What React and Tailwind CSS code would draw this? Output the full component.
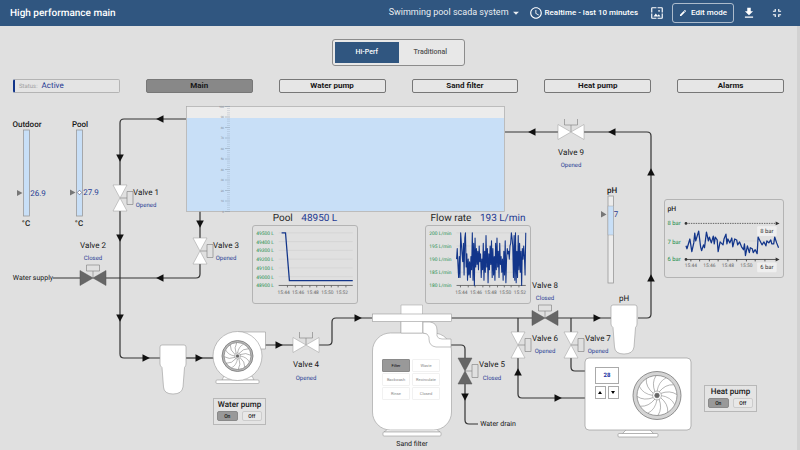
import { useState } from "react";
import {
  MdAccessTime,
  MdArrowDropDown,
  MdEdit,
  MdFileDownload,
  MdFullscreenExit,
  MdWallpaper,
} from "react-icons/md";

// Diagram units. Every node on the canvas is placed in this space.
const CANVAS = { width: 797, height: 352 };

const place = (x, y, w, h) => ({
  left: `${(x / CANVAS.width) * 100}%`,
  top: `${(y / CANVAS.height) * 100}%`,
  ...(w && { width: `${(w / CANVAS.width) * 100}%` }),
  ...(h && { height: `${(h / CANVAS.height) * 100}%` }),
});

const TABS = ["Main", "Water pump", "Sand filter", "Heat pump", "Alarms"];

const PIPES = [
  "M186 21H124Q120 21 120 25V256Q120 260 124 260H160",
  "M53 180H196Q200 180 200 176V113",
  "M186 260H214",
  "M265 247H328Q332 247 332 243V224Q332 220 336 220H372",
  "M451 220H611",
  "M451 247H461Q465 247 465 251V322Q465 326 469 326H478",
  "M518 220V296Q518 300 522 300H585",
  "M571 220V269Q571 273 575 273H585",
  "M638 220H647Q651 220 651 216V38Q651 34 647 34H505",
];

const ARROWS = [
  { x: 160, y: 21, dir: 180 },
  { x: 120, y: 60, dir: 90 },
  { x: 120, y: 140, dir: 90 },
  { x: 120, y: 220, dir: 90 },
  { x: 146, y: 260, dir: 0 },
  { x: 160, y: 180, dir: 180 },
  { x: 200, y: 126, dir: 90 },
  { x: 199, y: 260, dir: 0 },
  { x: 279, y: 247, dir: 0 },
  { x: 358, y: 220, dir: 0 },
  { x: 465, y: 299, dir: 90 },
  { x: 518, y: 274, dir: 270 },
  { x: 558, y: 300, dir: 0 },
  { x: 597, y: 220, dir: 0 },
  { x: 651, y: 180, dir: 270 },
  { x: 651, y: 74, dir: 270 },
  { x: 612, y: 34, dir: 180 },
  { x: 532, y: 34, dir: 180 },
];

const VALVES = [
  { name: "Valve 1", x: 120, y: 100, open: true, vertical: true, label: [146, 95], state: [146, 108] },
  { name: "Valve 2", x: 93, y: 180, open: false, label: [93, 148], state: [93, 161] },
  { name: "Valve 3", x: 200, y: 153, open: true, vertical: true, label: [226, 148], state: [226, 161] },
  { name: "Valve 4", x: 306, y: 247, open: true, label: [306, 267], state: [306, 281] },
  { name: "Valve 5", x: 465, y: 273, open: false, vertical: true, label: [492, 267], state: [492, 281] },
  { name: "Valve 6", x: 518, y: 247, open: true, vertical: true, label: [545, 241], state: [545, 254] },
  { name: "Valve 7", x: 571, y: 247, open: true, vertical: true, label: [598, 241], state: [598, 254] },
  { name: "Valve 8", x: 545, y: 220, open: false, label: [545, 188], state: [545, 201] },
  { name: "Valve 9", x: 571, y: 34, open: true, label: [571, 55], state: [571, 68] },
];

const FLOW = [
  190, 194, 188, 183, 191, 183, 200, 196, 192, 189, 196, 184, 198, 200, 187, 192, 182, 190, 184, 189,
  183, 191, 186, 200, 182, 196, 180, 198, 187, 194, 188, 193, 186, 195, 189, 192, 183, 190, 186, 196,
  182, 193, 185, 199, 187, 194, 181, 192, 186, 195, 188, 197, 183, 194, 184, 191, 182, 196, 186, 198,
  187, 193, 183, 196, 188, 191, 185, 190, 182, 193, 184, 197, 181, 190, 194, 192, 193, 190, 195, 196,
  200, 198, 195, 183, 199, 182, 200, 181, 193, 183, 199, 186, 196, 185, 193, 180, 194, 190, 195, 191,
  184, 200,
];

const PH = [
  [0, 23], [1, 26], [4, 16], [6, 29], [8, 20], [9, 10], [10, 18], [13, 8], [15, 24], [16, 28],
  [18, 22], [19, 25], [21, 9], [23, 18], [24, 14], [26, 20], [28, 13], [29, 21], [30, 14], [32, 17],
  [33, 29], [35, 19], [38, 22], [39, 16], [41, 11], [42, 21], [43, 16], [45, 20], [47, 15], [48, 24],
  [50, 16], [52, 17], [53, 22], [55, 19], [57, 24], [59, 27], [60, 21], [61, 33], [63, 23], [65, 30],
  [66, 25], [68, 26], [69, 30], [71, 27], [73, 31], [74, 14], [76, 18], [78, 22], [80, 19], [82, 23],
  [83, 18], [85, 20], [87, 17], [88, 21], [90, 21], [91, 14], [93, 20], [95, 25],
];

const FILTER_MODES = ["Filter", "Waste", "Backwash", "Recirculate", "Rinse", "Closed"];

const points = (list) => list.map(([x, y]) => `${x},${y}`).join(" ");

function Valve({ x, y, open, vertical }) {
  const fill = open ? "#fff" : "#666";
  const edge = open ? "#999" : "#555";
  return (
    <g transform={`translate(${x} ${y})`}>
      <rect x={vertical ? -6 : -13} y={vertical ? -13 : -6} width={vertical ? 12 : 26} height={vertical ? 26 : 12} fill="#e0e0e0" />
      {vertical ? (
        <g stroke="#888" strokeWidth="0.7" fill="none">
          <path d="M0 0H7M7-6.500H13V6.500H7Z" />
          <path d="M-7-13H7L-7 13H7Z" fill={fill} stroke={edge} strokeWidth="0.5" />
        </g>
      ) : (
        <g stroke="#888" strokeWidth="0.7" fill="none">
          <path d={open ? "M0 0V-7M-6.5-13V-7H6.5V-13" : "M0 0V-7M-6.5-13V-7H6.5V-13Z"} />
          <path d="M-13-7.500V7.500L13-7.500V7.500Z" fill={fill} stroke={edge} strokeWidth="0.5" />
        </g>
      )}
    </g>
  );
}

function Cartridge({ x, y }) {
  return (
    <path
      transform={`translate(${x} ${y})`}
      d="M2 0H24Q26 0 26 2V19Q26 21 24.500 22.500L23 42Q22 49 13 49Q4 49 3.500 42L2 22.500Q0 21 0 19V2Q0 0 2 0Z"
      fill="#fff"
      stroke="#999"
      strokeWidth="0.6"
    />
  );
}

function Fan({ x, y, r, blades, rim, rimFill }) {
  const inner = r - rim;
  return (
    <g transform={`translate(${x} ${y})`} fill="none" stroke="#777" strokeWidth="0.5">
      <circle r={r} fill={rimFill} strokeWidth="0.8" />
      <circle r={inner} fill="#fff" strokeWidth="0.7" />
      {Array.from({ length: blades }, (_, i) => (
        <path
          key={i}
          transform={`rotate(${(360 / blades) * i})`}
          d={`M0 ${-inner * 0.2}Q${inner * 0.08} ${-inner * 0.7} ${inner * 0.45} ${-inner * 0.88}`}
        />
      ))}
      <circle r={inner * 0.22} fill="#fff" />
      <circle r={inner * 0.12} fill="#666" />
    </g>
  );
}

function Piping() {
  return (
    <svg viewBox="0 0 797 352" className="w-full h-full block" aria-hidden="true">
      <g fill="none" stroke="#333" strokeWidth="1.2">
        {PIPES.map((d) => (
          <path key={d} d={d} />
        ))}
      </g>
      {ARROWS.map(({ x, y, dir }) => (
        <path key={`${x}-${y}`} transform={`translate(${x} ${y}) rotate(${dir})`} d="M-3.500-3.800L3.800 0L-3.500 3.800Z" fill="#111" />
      ))}
      {VALVES.map((valve) => (
        <Valve key={valve.name} {...valve} />
      ))}

      {/* pool tank with level scale */}
      <rect x="186.500" y="8.500" width="318" height="105" fill="#ececec" stroke="#aaa" strokeWidth="0.7" />
      <rect x="187" y="20" width="317" height="93" fill="#c8dff7" />
      <g stroke="#8797a8" strokeWidth="0.5">
        {Array.from({ length: 51 }, (_, i) => (
          <path key={i} d={`M${i % 5 === 0 ? 225 : 227} ${8.5 + i * 2.1}H230`} opacity={i % 5 === 0 ? 1 : 0.55} />
        ))}
      </g>
      <g fill="#7c8a99" fontSize="3" textAnchor="end">
        {Array.from({ length: 11 }, (_, i) => (
          <text key={i} x="224" y={9.5 + i * 10.5}>{100 - i * 10}</text>
        ))}
      </g>

      {/* temperature and pH bars */}
      <g stroke="#999" strokeWidth="0.8">
        <rect x="23.500" y="32" width="6" height="86" fill="#c8dff7" />
        <rect x="76.500" y="32" width="6" height="86" fill="#c8dff7" />
        <rect x="608" y="98" width="5.500" height="87" fill="#ececec" />
        <rect x="608" y="108" width="5.500" height="29" fill="#c8dff7" strokeWidth="0.4" />
      </g>
      <g fill="#777">
        <path d="M17 92L22.500 95L17 98ZM70 91.500L75.500 94.500L70 97.500ZM601 113L606.500 116.500L601 119.500Z" />
        <path d="M79.500 92.200L81.700 94.500L79.500 96.800L77.300 94.500Z" fill="#fff" stroke="#446" strokeWidth="0.6" />
      </g>

      {/* cartridge filters */}
      <Cartridge x={160} y={247} />
      <Cartridge x={611} y={207} />

      {/* water pump */}
      <g fill="#fff" stroke="#999" strokeWidth="0.6">
        <path d="M238 234H265.500V251H238Z" />
        <path d="M222 282H254L252 278H224Z" />
        <rect x="216" y="282" width="43" height="3.500" rx="1" />
        <circle cx="237.500" cy="258" r="24.500" />
      </g>
      <Fan x={237.5} y={258} r={15.5} blades={12} rim={2} rimFill="#b8b8b8" />

      {/* sand filter vessel */}
      <g fill="#fff" stroke="#999" strokeWidth="0.6">
        <path d="M384 334H440L436 331H388Z" />
        <rect x="383" y="334" width="58" height="4" rx="1" />
        <rect x="372.500" y="235" width="79" height="97" rx="18" />
        <path d="M401 224V235M423 224H430Q437 225 437 232V238Q438 241 442 241H451V249H436Q429 248 429 241V239Q428 235 423 235Z" />
        <path d="M401 207H422.500V235H401Z" stroke="#aaa" />
        <rect x="372.500" y="216" width="79" height="7.500" />
      </g>

      {/* heat pump body */}
      <g fill="#fff" stroke="#999" strokeWidth="0.7">
        <path d="M622 336H654L650 332H626Z" />
        <rect x="618" y="335.500" width="40" height="3.500" rx="1" />
        <rect x="585" y="260" width="106" height="72" rx="4" />
      </g>
      <Fan x={657} y={297.5} r={24} blades={12} rim={4} rimFill="#d4d4d4" />
    </svg>
  );
}

function Label({ x, y, className = "", children }) {
  return (
    <span style={place(x, y)} className={`absolute -translate-x-1/2 -translate-y-1/2 whitespace-nowrap ${className}`}>
      {children}
    </span>
  );
}

function TimeChart({ title, value, rows, grid, box, children }) {
  const [x, y] = box;
  return (
    <>
      <Label x={x + 53} y={y - 6} className="text-[10px] text-neutral-800">
        {title} <span className="ml-1.5 text-[#1f3a93]">{value}</span>
      </Label>
      <figure style={place(x, y, 106, 79)} className="absolute rounded-[3px] border border-[#b4b4b4]">
        <svg viewBox="0 0 106 79" className="w-full h-full block" role="img" aria-label={title}>
          <g fontSize="5" fill="#1e8e4e">
            {rows.map((row, i) => (
              <text key={row} x="3" y={9 + (54 / (rows.length - 1)) * i}>{row}</text>
            ))}
          </g>
          {rows.map((row, i) => (
            <path key={row} d={`M${grid} ${7 + (54 / (rows.length - 1)) * i}H102`} stroke="#cfcfcf" strokeWidth="0.6" />
          ))}
          <path d={`M${grid} 61H102M35 61V63M43 61V63M50 61V63M58 61V63M65 61V63M73 61V63M80 61V63M87 61V63M95 61V63`} stroke="#555" strokeWidth="0.8" />
          <g fontSize="5" fill="#666" textAnchor="middle">
            {["15:44", "15:46", "15:48", "15:50", "15:52"].map((time, i) => (
              <text key={time} x={grid + 5 + i * 15} y="70">{time}</text>
            ))}
          </g>
          {children}
        </svg>
      </figure>
    </>
  );
}

function PhChart() {
  return (
    <figure style={place(664, 101, 120, 79)} className="absolute rounded-[3px] border border-[#b4b4b4]">
      <svg viewBox="0 0 120 79" className="w-full h-full block" role="img" aria-label="pH">
        <text x="2" y="11" fontSize="7" fontWeight="500" fill="#222">pH</text>
        <g fontSize="6" fill="#1e8e4e">
          <text x="2" y="26">8 bar</text>
          <text x="2" y="45">7 bar</text>
          <text x="2" y="63">6 bar</text>
        </g>
        <path d="M21 42H116" stroke="#cfcfcf" strokeWidth="0.6" />
        <path d="M21 24H115" stroke="#444" strokeWidth="0.8" strokeDasharray="1.500 1" />
        <path d="M21 61H115M26 61V63M35 61V63M45 61V63M54 61V63M64 61V63M73 61V63M83 61V63M92 61V63M102 61V63" stroke="#444" strokeWidth="0.9" />
        <g fill="#333">
          <circle cx="21" cy="24" r="1.400" />
          <circle cx="21" cy="61" r="1.400" />
          <path d="M113 22L117 24L113 26ZM113 59L117 61L113 63Z" />
        </g>
        <g fontSize="5" fill="#666" textAnchor="middle">
          <text x="26" y="69">15:44</text>
          <text x="45" y="69">15:46</text>
          <text x="64" y="69">15:48</text>
          <text x="83" y="69">15:50</text>
        </g>
        <polyline transform="translate(21 24)" points={points(PH)} fill="none" stroke="#12358a" strokeWidth="1.300" strokeLinejoin="round" />
        <rect x="94" y="27" width="20" height="10" rx="1" fill="#efefef" />
        <rect x="94" y="64" width="20" height="10" rx="1" fill="#efefef" />
        <g fontSize="6" fill="#333" textAnchor="middle">
          <text x="104" y="34">8 bar</text>
          <text x="104" y="71">6 bar</text>
        </g>
      </svg>
    </figure>
  );
}

function PowerCard({ title, x, y }) {
  const [on, setOn] = useState(true);
  const base = "flex-1 h-2.5 rounded-[2px] border text-[5px] leading-none font-medium flex items-center justify-center";
  return (
    <section style={place(x, y, 53, 27)} className="absolute flex flex-col justify-between p-[3px] pt-px border border-[#b8b8b8] bg-[#e4e4e4]">
      <h2 className="text-[8px] leading-[9px] font-medium text-center text-neutral-900 whitespace-nowrap">{title}</h2>
      <div className="flex gap-1">
        <button type="button" onClick={() => setOn(true)} className={`${base} ${on ? "bg-[#999] border-[#8a8a8a]" : "bg-[#e8e8e8] border-[#ccc]"}`}>On</button>
        <button type="button" onClick={() => setOn(false)} className={`${base} ${on ? "bg-[#e8e8e8] border-[#ccc]" : "bg-[#999] border-[#8a8a8a]"}`}>Off</button>
      </div>
    </section>
  );
}

function FilterModes() {
  const [mode, setMode] = useState("Filter");
  return (
    <div style={place(382, 261, 58, 41)} className="absolute grid grid-cols-2 gap-x-0.5 gap-y-px">
      {FILTER_MODES.map((name) => (
        <button
          key={name}
          type="button"
          onClick={() => setMode(name)}
          className={`rounded-[1px] border text-[4px] leading-none flex items-center justify-center ${
            mode === name ? "bg-[#999] border-[#8a8a8a] text-black" : "bg-white border-[#f1f1f1] text-[#888]"
          }`}
        >
          {name}
        </button>
      ))}
    </div>
  );
}

function HeatPumpControls() {
  const [target, setTarget] = useState(28);
  const stepClass = "flex-1 border border-[#aaa] bg-white flex items-center justify-center";
  return (
    <div style={place(595, 269, 24, 32)} className="absolute flex flex-col gap-0.5">
      <output className="h-[17px] border border-[#aaa] bg-white text-[6px] font-bold text-[#1a2ea0] flex items-center justify-center">{target}</output>
      <div className="flex-1 flex gap-0.5">
        <button type="button" aria-label="Raise" onClick={() => setTarget(target + 1)} className={stepClass}>
          <svg viewBox="0 0 4 3" className="w-1 h-[3px]"><path d="M0 3L2 0L4 3Z" /></svg>
        </button>
        <button type="button" aria-label="Lower" onClick={() => setTarget(target - 1)} className={stepClass}>
          <svg viewBox="0 0 4 3" className="w-1 h-[3px]"><path d="M0 0L2 3L4 0Z" /></svg>
        </button>
      </div>
    </div>
  );
}

function Header() {
  return (
    <header className="h-[26px] px-2.5 flex items-center justify-between bg-[#305680] text-white">
      <h1 className="text-[10px] font-medium">High performance main</h1>
      <div className="flex items-center">
        <button type="button" className="flex items-center text-[9px] opacity-90">
          Swimming pool scada system
          <MdArrowDropDown className="w-3.5 h-3.5" />
        </button>
        <button type="button" className="ml-1.5 flex items-center gap-0.5 text-[8px] font-medium">
          <MdAccessTime className="w-3.5 h-3.5" />
          Realtime - last 10 minutes
        </button>
        <button type="button" aria-label="Dashboard image" className="ml-3">
          <MdWallpaper className="w-3.5 h-3.5" />
        </button>
        <button type="button" className="ml-2 h-5 px-1.5 flex items-center gap-1 rounded-[3px] border border-white/60 text-[8px] font-medium">
          <MdEdit className="w-2 h-2" />
          Edit mode
        </button>
        <button type="button" aria-label="Export" className="ml-2">
          <MdFileDownload className="w-3.5 h-3.5" />
        </button>
        <button type="button" aria-label="Exit fullscreen" className="ml-3.5 mr-1.5">
          <MdFullscreenExit className="w-3.5 h-3.5" />
        </button>
      </div>
    </header>
  );
}

export default function App() {
  const [view, setView] = useState("Hi-Perf");
  const [tab, setTab] = useState("Main");

  return (
    <div className="min-h-screen flex flex-col bg-[#e0e0e0] font-['Roboto',sans-serif] text-neutral-900 [text-rendering:geometricPrecision]">
      <Header />
      <main className="flex-1 border-r-3 border-[#d2d2d2]">
        <div className="pt-[13px] flex justify-center">
          <div className="h-[27px] w-[133px] p-0.5 flex rounded-[3px] border border-[#8c8c8c] bg-[#e8e8e8]">
            {["Hi-Perf", "Traditional"].map((name) => (
              <button
                key={name}
                type="button"
                onClick={() => setView(name)}
                className={`flex-1 text-[7px] font-medium ${view === name ? "bg-[#305680] text-white" : "text-neutral-600"}`}
              >
                {name}
              </button>
            ))}
          </div>
        </div>

        <nav className="mt-[13px] mb-[5px] px-[13px] grid grid-cols-6 gap-[26px]">
          <p className="h-3.5 px-1 flex items-center gap-1 rounded-[2px] border border-l-2 border-[#b4b4b4] border-l-[#12358a] bg-[#e4e4e4] text-[6px] text-neutral-400">
            Status: <span className="text-[8px] text-[#1f3a93]">Active</span>
          </p>
          {TABS.map((name) => (
            <button
              key={name}
              type="button"
              onClick={() => setTab(name)}
              className={`h-3.5 flex items-center justify-center rounded-[2px] border border-[#777] text-[8px] font-bold ${
                tab === name ? "bg-[#888]" : "bg-[#e6e6e6]"
              }`}
            >
              {name}
            </button>
          ))}
        </nav>

        <div className="relative w-full aspect-[797/352] text-[8px] leading-none">
          <Piping />

          <Label x={27} y={27} className="font-medium">Outdoor</Label>
          <Label x={80} y={27} className="font-medium">Pool</Label>
          <Label x={26} y={126} className="font-medium">°C</Label>
          <Label x={79} y={126} className="font-medium">°C</Label>
          <Label x={38} y={96} className="text-[#1f3a93]">26.9</Label>
          <Label x={91} y={95} className="text-[#1f3a93]">27.9</Label>
          <Label x={612} y={93} className="font-medium">pH</Label>
          <Label x={616} y={117} className="text-[#1f3a93]">7</Label>
          <Label x={624} y={201}>pH</Label>
          <Label x={33} y={180} className="text-[7px]">Water supply</Label>
          <Label x={498} y={326} className="text-[7px]">Water drain</Label>
          <Label x={412} y={346} className="text-[7px]">Sand filter</Label>

          {VALVES.map(({ name, open, label, state }) => (
            <div key={name}>
              <Label x={label[0]} y={label[1]}>{name}</Label>
              <Label x={state[0]} y={state[1]} className="text-[6px] text-[#1f3a93]">{open ? "Opened" : "Closed"}</Label>
            </div>
          ))}

          <TimeChart
            title="Pool"
            value="48950 L"
            grid={26}
            box={[252, 127]}
            rows={["49500 L", "49400 L", "49300 L", "49200 L", "49100 L", "49000 L", "48900 L"]}
          >
            <path d="M29 7H33L37 56H102" fill="none" stroke="#12358a" strokeWidth="1.300" />
          </TimeChart>
          <TimeChart
            title="Flow rate"
            value="193 L/min"
            grid={31}
            box={[425, 127]}
            rows={["200 L/min", "195 L/min", "190 L/min", "185 L/min", "180 L/min"]}
          >
            <polyline
              points={points(FLOW.map((v, i) => [31 + (i * 71) / (FLOW.length - 1), 61 - (v - 180) * 2.7]))}
              fill="none"
              stroke="#12358a"
              strokeWidth="1.100"
              strokeLinejoin="round"
            />
          </TimeChart>
          <PhChart />

          <FilterModes />
          <HeatPumpControls />
          <PowerCard title="Water pump" x={213} y={300} />
          <PowerCard title="Heat pump" x={704} y={287} />
        </div>
      </main>
    </div>
  );
}
